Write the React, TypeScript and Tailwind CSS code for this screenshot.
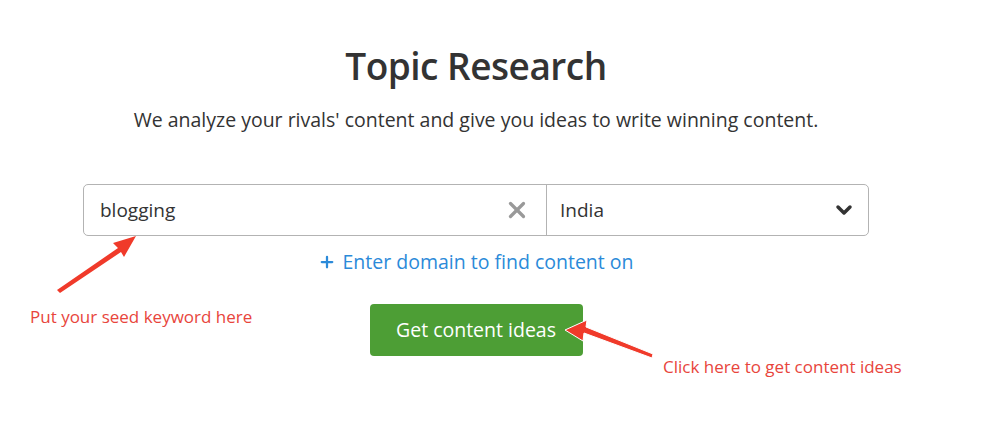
import { X, ChevronDown, Plus } from "lucide-react";

export default function App() {
    return (
        <div className="relative w-[984px] h-[440px] bg-white overflow-hidden font-['Open_Sans',sans-serif] text-[#333]">
            <div className="ml-[83px] w-[786px] flex flex-col items-center pt-[42px]">
                <h1 className="text-[37px] leading-[48px] font-semibold text-[#333] tracking-[-0.5px]">Topic Research</h1>
                <p className="mt-[17px] text-[19.5px] leading-[26px] text-[#333]">
                    We analyze your rivals' content and give you ideas to write winning content.
                </p>
                <div className="mt-[51px] w-full h-[52px] flex border border-[#b3b3b3] rounded-[5px] bg-white">
                    <div className="flex items-center w-[463px] pl-4 pr-4 border-r border-[#b3b3b3]">
                        <span className="flex-1 text-[19px] text-[#333]">blogging</span>
                        <X className="w-[26px] h-[26px] text-[#999]" strokeWidth={3} />
                    </div>
                    <div className="flex items-center flex-1 pl-[13px] pr-[12px]">
                        <span className="flex-1 text-[19px] text-[#333]">India</span>
                        <ChevronDown className="w-[24px] h-[24px] text-[#333]" strokeWidth={3.5} />
                    </div>
                </div>
                <div className="mt-[13px] flex items-center gap-[6px] text-[#2b8ad9] text-[19.5px] leading-[26px]">
                    <Plus className="w-[18px] h-[18px]" strokeWidth={3} />
                    <span>Enter domain to find content on</span>
                </div>
                <button className="mt-[29px] w-[213px] h-[52px] rounded-[4px] bg-[#4d9e35] text-white text-[19.5px] font-medium">
                    Get content ideas
                </button>
            </div>

            <span className="absolute left-[30px] top-[304px] text-[17px] text-[#e8453c]">Put your seed keyword here</span>
            <span className="absolute left-[663px] top-[354px] text-[17px] text-[#e8453c]">Click here to get content ideas</span>

            <svg className="absolute left-0 top-0" width="984" height="440">
                <path d="M57 290 L118 248 L113 243 L136 236 L124 257 L121 252 L60 293 Z" fill="#f03a2a" />
                <path d="M652 358 L584 333 L583 341 L565 330 L587 320 L586 327 L653 354 Z" fill="#f03a2a" stroke="white" strokeWidth="1" />
            </svg>
        </div>
    );
}
